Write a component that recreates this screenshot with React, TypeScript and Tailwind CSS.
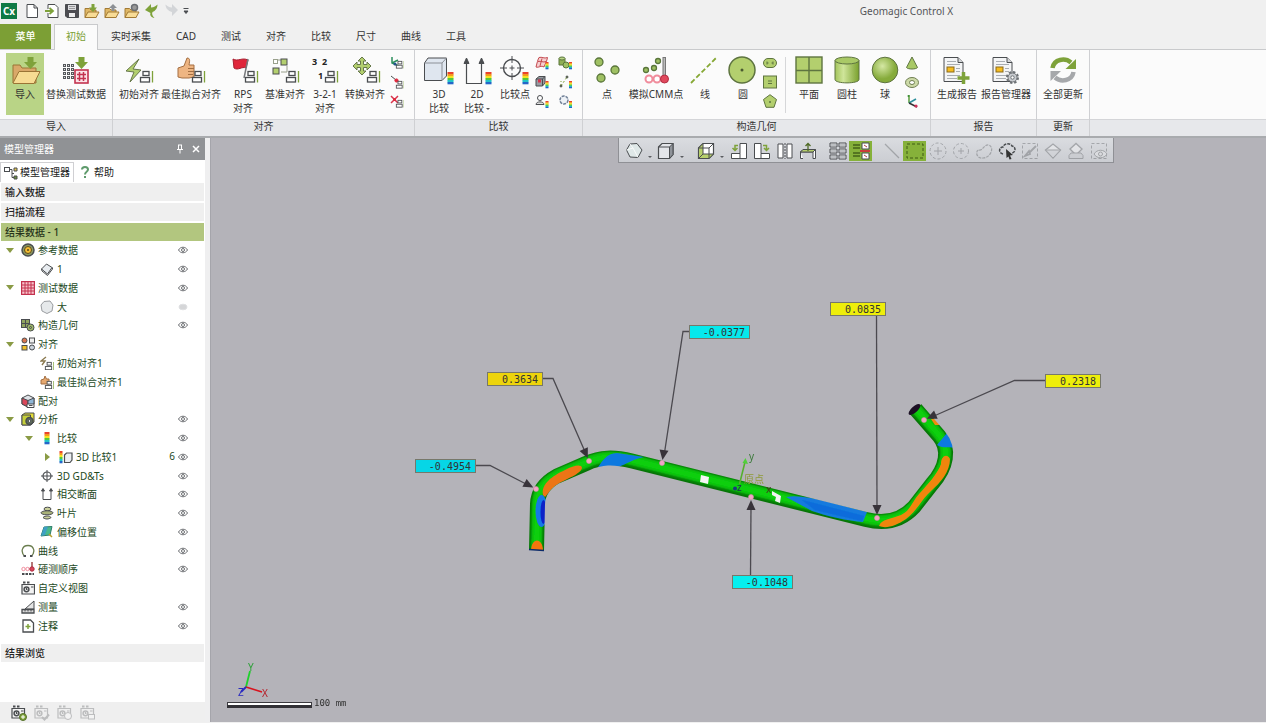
import type { ReactNode } from 'react'
import clsx from 'clsx'

/* ---------- shared drawing parts ---------- */

const INK = '#4a4d50'
const GREEN = '#7ea23a'
const LIME = '#b3cf6e'

type IconProps = { children: ReactNode; w?: number; h?: number }

function Svg({ children, w = 14, h = 14 }: IconProps) {
  return (
    <svg width={w} height={h} viewBox={`0 0 ${w} ${h}`} fill="none" stroke={INK} className="shrink-0" aria-hidden="true">
      {children}
    </svg>
  )
}

function Big({ children }: { children: ReactNode }) {
  return <Svg w={36} h={32}>{children}</Svg>
}

function Badge({ x, y, s = 1 }: { x: number; y: number; s?: number }) {
  return (
    <g transform={`translate(${x} ${y}) scale(${s})`} strokeWidth="1.3">
      <rect x="3" y="0.5" width="6" height="4" fill="#fff" />
      <rect x="0.5" y="6.5" width="9" height="4.5" fill="#fff" />
      <path d="M12.5 0V11.5" stroke={GREEN} />
    </g>
  )
}

function Heat({ x, y, w = 6, h = 12 }: { x: number; y: number; w?: number; h?: number }) {
  const colors = ['#e8442c', '#f59a1c', '#f2e41e', '#55c83a', '#22c4c8', '#2466c8']
  return (
    <g stroke="none">
      {colors.map((c, i) => (
        <rect key={c} x={x} y={y + (i * h) / 6} width={w} height={h / 6 + 0.3} fill={c} />
      ))}
    </g>
  )
}

function DownArrow({ x, y }: { x: number; y: number }) {
  return <path transform={`translate(${x} ${y})`} d="M3.5 0H9.500V5H13L6.500 12L0 5H3.500Z" fill={GREEN} stroke="none" />
}

function Folder() {
  return (
    <g stroke="#a27a35" strokeWidth="1">
      <path d="M1 14.500V5.500H5.500L7 7H12V14.500Z" fill="#dfb765" />
      <path d="M1 14.500L4 9H15L12 14.500Z" fill="#f8dc96" />
    </g>
  )
}

function Report() {
  return (
    <g>
      <path d="M5 3.500H19L24 8.500V27.500H5Z" fill="#f4f5f6" />
      <path d="M19 3.500V8.500H24" fill="#d4d6d8" />
      <path d="M8 7.500H17M8 10.500H21M17 14.500H21M17 17.500H21M8 21.500H21M8 24.500H18" stroke="#a9adb2" />
      <rect x="8" y="13" width="7" height="5" fill="#f5bb1e" stroke="#8a6a1a" />
    </g>
  )
}

function Camera() {
  return (
    <g>
      <path d="M1 3.500H13.500V13H1Z" fill="#f2f2f2" strokeWidth="1.200" />
      <path d="M2 1.500H4.500M6 1.500H8.500" strokeWidth="2" />
      <circle cx="5.500" cy="8.300" r="2.400" strokeWidth="1.500" />
      <path d="M5.500 7V8.500H6.500M10 6H12.500" strokeWidth="1.200" />
    </g>
  )
}

/* ---------- quick access bar ---------- */

const quickTools: { name: string; icon: ReactNode }[] = [
  { name: 'New', icon: <path d="M3 1.500H10L13.500 5V14.500H3Z M10 1.500V5H13.500" fill="#fff" /> },
  {
    name: 'Open',
    icon: (
      <>
        <path d="M4 6V1.500H11L14 4.500V14.500H4V10" fill="#fff" />
        <path d="M1 8H8M5.500 5L9 8L5.500 11" stroke={GREEN} strokeWidth="1.800" />
      </>
    ),
  },
  {
    name: 'Save',
    icon: (
      <>
        <path d="M1.500 1.500H14.500V14.500H3L1.500 13Z" fill="#4d4d52" />
        <path d="M4 2H12V7H4Z" fill="#dcdde0" stroke="none" />
        <path d="M5 10H11V14H5Z" fill="#eee" stroke="none" />
        <path d="M5 3.500H11M5 5.500H11" stroke="#888" strokeWidth="0.800" />
      </>
    ),
  },
  { name: 'Import', icon: <><Folder /><path d="M7.500 1H10.500V4.500H13L9 9L5 4.500H7.500Z" fill={GREEN} stroke="none" /></> },
  { name: 'Export', icon: <><Folder /><path d="M7.500 8H10.500V5H13L9 1L5 5H7.500Z" fill="#8c8f94" stroke="none" /></> },
  { name: 'Folder settings', icon: <><Folder /><circle cx="10.500" cy="4.500" r="3" fill="#999" stroke="#6b6e73" strokeWidth="1.500" /></> },
  { name: 'Undo', icon: <path d="M1 7L7 1V4.500C10 4.500 12 3 13.500 1.500C13.500 5 11.500 8 8.500 9C7.500 11 8.500 13 10.500 15C7 14.500 5.500 12 6.500 10Z" fill={GREEN} stroke="none" /> },
  { name: 'Redo', icon: <path d="M14 7L8 1V4.500C5 4.500 3 3 1.500 1.500C1.500 5 4 8 8 9V13Z" fill="#d3d5d8" stroke="none" /> },
]

function TitleBar() {
  return (
    <div className="flex h-6 items-center pb-0.5">
      <div className="ml-px flex size-4 items-center justify-center bg-[#0f7a45] text-[10px] font-bold text-white">Cx</div>
      <div className="ml-[7px] flex gap-1">
        {quickTools.map((t) => (
          <button key={t.name} type="button" aria-label={t.name}>
            <Svg w={16} h={16}>{t.icon}</Svg>
          </button>
        ))}
      </div>
      <button type="button" aria-label="Customize" className="ml-0.5">
        <Svg w={8} h={8}><path d="M1.500 1.500H6.500M2 4L4 6.500L6 4Z" fill={INK} /></Svg>
      </button>
      <h1 className="ml-auto mr-[313px] text-[10px] text-[#55565a]">Geomagic Control X</h1>
    </div>
  )
}

const tabs = ['实时采集', 'CAD', '测试', '对齐', '比较', '尺寸', '曲线', '工具']

function TabBar() {
  return (
    <nav className="flex h-[26px] items-stretch gap-px border-b border-[#c9cacc] text-[10px] text-[#333]">
      <button type="button" className="w-[51px] bg-[#7c9f35] font-medium text-white">菜单</button>
      <button type="button" className="-mb-px ml-0.5 w-11 border border-b-0 border-[#c9cacc] bg-[#fbfbfb] pb-0.5 text-[#7c9f35]">初始</button>
      {tabs.map((t) => (
        <button key={t} type="button" className="px-3">{t}</button>
      ))}
    </nav>
  )
}

/* ---------- ribbon ---------- */

function Tool({ icon, label, width = 'w-9', active = false }: { icon: ReactNode; label: ReactNode; width?: string; active?: boolean }) {
  return (
    <button type="button" className={clsx('flex h-[62px] shrink-0 flex-col items-center whitespace-nowrap pt-px', width, active && 'bg-[#b9d486]')}>
      {icon}
      <span className="mt-px text-[10px] leading-[14px]">{label}</span>
    </button>
  )
}

function SmallTools({ items, className }: { items: [string, ReactNode][]; className?: string }) {
  return (
    <div className={clsx('flex flex-col gap-[5px] pt-[3px]', className)}>
      {items.map(([name, icon]) => (
        <button key={name} type="button" aria-label={name}>
          <Svg>{icon}</Svg>
        </button>
      ))}
    </div>
  )
}

function Group({ title, className, children }: { title: string; className?: string; children: ReactNode }) {
  return (
    <section className={clsx('flex shrink-0 flex-col border-r border-[#cfd0d3]', className)}>
      <div className="flex h-[69px] gap-0.5 pl-1.5 pt-[3px]">{children}</div>
      <h2 className="h-[17px] text-center text-[10px] leading-[14px]">{title}</h2>
    </section>
  )
}

const dot = (cx: number, cy: number, r: number) => <circle cx={cx} cy={cy} r={r} fill="#9fc063" stroke="#59753a" strokeWidth="1.300" />

const Triad = (
  <g strokeWidth="1.500">
    <path d="M4 1V9" stroke="#5a9c3c" />
    <path d="M4 9L11 5" stroke="#2b8f9c" />
    <path d="M4 9L12 13" stroke="#333" />
    <circle cx="3.500" cy="2" r="1" fill="#3b8e34" stroke="none" />
    <circle cx="11" cy="12" r="1.600" fill="#d22f5a" stroke="none" />
  </g>
)

function Ribbon() {
  return (
    <div className="flex overflow-hidden border-b-2 border-[#a9abae] bg-[linear-gradient(#fbfbfb_69px,#d4d5d8_69px,#d4d5d8_70px,#e7e8eb_70px)] text-[#333]">
      <Group title="导入" className="w-[113px]">
        <Tool
          active
          label="导入"
          width="w-[38px]"
          icon={
            <Big>
              <g stroke="#9a7435">
                <path d="M6 29V11H13L15 14H29V29Z" fill="#d9a869" />
                <path d="M6 29L12 17.500H33L27 29.500H7Z" fill="#f7db92" />
              </g>
              <DownArrow x={17} y={3} />
            </Big>
          }
        />
        <Tool
          label="替换测试数据"
          width="w-[60px]"
          icon={
            <Big>
              <path d="M5 11.500H16M5 15.500H16M5 19.500H16M5 23.500H16" stroke="#55585c" strokeWidth="3" strokeDasharray="3 1" />
              <path d="M6 11.500H17M6 15.500H17M6 19.500H17M6 23.500H17" stroke="#ddd" strokeWidth="1" strokeDasharray="1 3" />
              <rect x="17" y="16" width="13" height="13" fill="#fbe3e8" stroke="#c3324f" strokeWidth="1.600" />
              <path d="M21.500 18V27M25.500 18V27M19 20.500H28M19 24.500H28" stroke="#c3324f" strokeWidth="1.500" />
              <DownArrow x={17} y={3} />
            </Big>
          }
        />
      </Group>

      <Group title="对齐" className="w-[302px]">
        <Tool
          label="初始对齐"
          width="w-10"
          icon={<Big><path d="M18 5L5 17L13 18L9 28L20 16L12 15Z" fill={LIME} stroke="#66774a" /><Badge x={19} y={17} /></Big>}
        />
        <Tool
          label="最佳拟合对齐"
          width="w-[60px]"
          icon={
            <Big>
              <path d="M5 14L11 12L14 4C17 4 17 6 16 11H21V23L16 24H9L5 23Z" fill="#eeb582" stroke="#a46f42" />
              <path d="M15 14.500H21M15 17.500H21M15 20.500H20" stroke="#a46f42" />
              <Badge x={19} y={17} />
            </Big>
          }
        />
        <Tool
          label={<>RPS<br />对齐</>}
          width="w-10"
          icon={
            <Big>
              <path d="M8 5C13 8 17 3 23 6L21 14C17 12 13 17 9 14Z" fill="#e0263b" stroke="#a81f30" />
              <path d="M23 5L19 24" stroke="#77797c" strokeWidth="1.500" />
              <Badge x={20} y={17} />
            </Big>
          }
        />
        <Tool
          label="基准对齐"
          width="w-10"
          icon={
            <Big>
              <path d="M8 10V6H15M20 12V18H14" stroke="#99a08c" />
              <rect x="14" y="5" width="6" height="6" fill={LIME} />
              <rect x="6" y="14" width="6" height="6" fill={LIME} />
              <rect x="6.500" y="5.500" width="4" height="4" fill="#fff" stroke="#99a08c" />
              <Badge x={19} y={17} />
            </Big>
          }
        />
        <Tool
          label={<>3-2-1<br />对齐</>}
          icon={
            <Big>
              <g fill="#222" stroke="none" className="text-[9px] font-bold">
                <text x="5" y="11">3</text>
                <text x="15" y="11">2</text>
                <text x="11" y="25">1</text>
              </g>
              <Badge x={18} y={17} />
            </Big>
          }
        />
        <Tool
          label="转换对齐"
          width="w-10"
          icon={
            <Big>
              <path
                d="M15 3L19 7H16.500V10.500H20V8L24 12L20 16V13.500H16.500V17H19L15 21L11 17H13.500V13.500H10V16L6 12L10 8V10.500H13.500V7H11Z"
                fill={LIME}
                stroke="#66774a"
              />
              <Badge x={20} y={17} />
            </Big>
          }
        />
        <SmallTools
          className="ml-[3px]"
          items={[
            ['Coordinate align', <><path d="M2 1V7L9 10M2 7L8 4" stroke="#2b8f5c" strokeWidth="1.500" /><circle cx="5" cy="8" r="1.500" fill="#25508f" stroke="none" /><Badge x={6} y={5} s={0.65} /></>],
            ['Line align', <><path d="M1 1L6 5" /><circle cx="6.500" cy="5.500" r="1.600" fill="#e0263b" stroke="#e0263b" /><Badge x={6} y={6} s={0.65} /></>],
            ['Point align', <><path d="M1 2L8 9M8 2L1 9" stroke="#d8344c" strokeWidth="1.500" /><circle cx="4.500" cy="5.500" r="1.500" fill="#e0263b" stroke="none" /><Badge x={6} y={6} s={0.65} /></>],
          ]}
        />
      </Group>

      <Group title="比较" className="w-[168px]">
        <Tool
          label={<>3D<br />比较</>}
          icon={
            <Big>
              <path d="M3.500 9L7 4H25.500V22L21 26.500H3.500Z" fill="#dfe6ef" />
              <path d="M3.500 9H21V26.500M21 9L25.500 4" stroke="#8c9097" />
              <Heat x={26.500} y={18} />
            </Big>
          }
        />
        <Tool
          label={<>2D<br />比较<i className="ml-0.5 inline-block border-x-2 border-t-2 border-x-transparent border-t-[#555] align-middle" /></>}
          icon={
            <Big>
              <path d="M7.500 8V29.500H22.500V8" strokeWidth="1.200" />
              <path d="M7.500 4L10 9.500H5ZM22.500 4L25 9.500H20Z" fill={INK} />
              <Heat x={26.500} y={18} />
            </Big>
          }
        />
        <Tool
          label="比较点"
          icon={
            <Big>
              <circle cx="15" cy="14" r="8.500" strokeWidth="1.400" />
              <path d="M15 2V9M15 19V26M3 14H10M20 14H27M12.500 14H17.500M15 11.500V16.500" />
              <Heat x={25.500} y={18} />
            </Big>
          }
        />
        <SmallTools
          items={[
            ['Surface compare', <><path d="M1 11C2 7 3 3 4 1.500C7 .5 9 3 12.500 1.500C12 5 10 8 9 11C6 9 4 12 1 11Z" fill="#f6cfd0" stroke="#c44a50" /><path d="M3 5.500C6 4.500 8 7 11 5.500M7 2.500L5 10" stroke="#c44a50" /><Heat x={10.500} y={6} w={3} h={7} /></>],
            ['Solid compare', <><path d="M1 4L4 1.500H10V8L7.500 11H1Z" fill="#999ca2" /><path d="M1 4H7.500V11M7.500 4L10 1.500" /><rect x="3" y="4.500" width="3" height="3" fill="#d8344c" stroke="none" /><Heat x={10.500} y={6} w={3} h={7} /></>],
            ['Profile compare', <><circle cx="5" cy="4" r="2.500" fill="#fff" /><path d="M1 10.500C1 7 9 7 9 10.500Z" fill="#ddd" /><Heat x={10.500} y={7} w={3} h={7} /></>],
          ]}
        />
        <SmallTools
          className="ml-[7px]"
          items={[
            ['Cylinder compare', <><path d="M1 2.500H7V9H1Z" fill="#8fae55" stroke="#59753a" /><ellipse cx="4" cy="2.500" rx="3" ry="1.500" fill="#b9d486" stroke="#59753a" /><circle cx="8" cy="9" r="3" fill="#9fc063" stroke="#59753a" /><Heat x={11} y={6} w={3} h={7} /></>],
            ['Point deviation', <><path d="M3 11L9 2M3 11V6" strokeDasharray="2 2" stroke="#7ea23a" /><circle cx="9" cy="2" r="1" fill={GREEN} /><circle cx="3" cy="11" r="1" fill={GREEN} /><Heat x={11} y={6} w={3} h={7} /></>],
            ['Circle deviation', <><circle cx="6" cy="6" r="4" stroke="#6f7f96" strokeDasharray="3 1" strokeWidth="1.500" fill="#eef2f7" /><Heat x={11} y={7} w={3} h={7} /></>],
          ]}
        />
      </Group>

      <Group title="构造几何" className="w-[348px]">
        <Tool label="点" icon={<Big>{dot(10, 8, 4)}{dot(26, 16, 4)}{dot(12, 24, 4)}</Big>} />
        <Tool
          label="模拟CMM点"
          width="w-[58px]"
          icon={
            <Big>
              {dot(8, 16, 2.5)}{dot(16, 14, 2.5)}{dot(20, 7, 2.5)}
              <rect x="25" y="3.500" width="2.500" height="18" fill="#bbb" stroke="#777" />
              <circle cx="11" cy="25" r="3.500" fill="#fff" stroke="#f08c9c" strokeWidth="2" />
              <circle cx="19" cy="25" r="3.500" fill="#fff" stroke="#f08c9c" strokeWidth="2" />
              <circle cx="26.500" cy="25" r="4" fill="#e0485c" stroke="#b12d42" />
            </Big>
          }
        />
        <Tool label="线" icon={<Big><path d="M4 29L30 3" stroke="#86a834" strokeWidth="1.800" strokeDasharray="5 2.500" /></Big>} />
        <Tool label="圆" icon={<Big><circle cx="17" cy="16" r="13" fill={LIME} stroke="#5e7440" strokeWidth="1.500" /><circle cx="17" cy="16" r="1.500" fill="#4a5a30" stroke="none" /></Big>} />
        <SmallTools
          items={[
            ['Slot', <><rect x="0.500" y="2.500" width="13" height="9" rx="4.500" fill={LIME} stroke="#5e7440" /><path d="M4 5.500V8.500M10 5.500V8.500M4 7H5.500M8.500 7H10" stroke="#5e7440" /></>],
            ['Rectangle', <><rect x="0.500" y="1" width="13" height="12" fill={LIME} stroke="#5e7440" /><path d="M5 6H9M5 8.500H9" stroke="#5e7440" /></>],
            ['Polygon', <><path d="M7 .7L13.500 5.500L11 13.300H3L.5 5.500Z" fill={LIME} stroke="#5e7440" /><circle cx="7" cy="8" r="1" fill="#5e7440" stroke="none" /></>],
          ]}
        />
        <div className="mx-1.5 mt-1 h-14 w-px bg-[#d6d7d9]" />
        <div className="-ml-[3px] flex gap-0.5">
          <Tool label="平面" icon={<Big><rect x="5" y="3" width="26" height="26" fill={LIME} stroke="#5e7440" strokeWidth="1.400" /><path d="M18 3V29M5 16.500H31" stroke="#5e7440" strokeWidth="1.400" /></Big>} />
          <Tool
            label="圆柱"
            icon={
              <Big>
                <defs>
                  <linearGradient id="cyl"><stop stopColor="#a3c45b" /><stop offset=".35" stopColor="#cfe59a" /><stop offset="1" stopColor="#79a02d" /></linearGradient>
                </defs>
                <path d="M6 6.500V25.500C6 30 30 30 30 25.500V6.500Z" fill="url(#cyl)" stroke="#5e7440" />
                <ellipse cx="18" cy="6.500" rx="12" ry="3.500" fill="#a9c966" stroke="#5e7440" />
              </Big>
            }
          />
          <Tool
            label="球"
            icon={
              <Big>
                <defs>
                  <radialGradient id="ball" cx=".4" cy=".35"><stop stopColor="#d5e8a4" /><stop offset="1" stopColor="#86ab3b" /></radialGradient>
                </defs>
                <circle cx="18" cy="16" r="12.800" fill="url(#ball)" stroke="#5e7440" />
              </Big>
            }
          />
        </div>
        <SmallTools
          items={[
            ['Cone', <path d="M7 1L12.500 11.500C11 13.500 3 13.500 1.500 11.500Z" fill="#a9c966" stroke="#5e7440" />],
            ['Torus', <><ellipse cx="7" cy="7.500" rx="6.500" ry="5" fill="#cddaa8" stroke="#6f7f52" /><ellipse cx="7" cy="7.500" rx="2.500" ry="2" fill="#fff" stroke="#6f7f52" /></>],
            ['Coordinate', Triad],
          ]}
        />
      </Group>

      <Group title="报告" className="w-[106px]">
        <Tool label="生成报告" width="w-10" icon={<Big><Report /><path d="M24.500 18V30M18.500 24H30.500" stroke={GREEN} strokeWidth="3.500" /></Big>} />
        <Tool
          label="报告管理器"
          width="w-[54px]"
          icon={
            <Big>
              <Report />
              <circle cx="24.500" cy="23.500" r="5.500" stroke="#6e7276" strokeWidth="2" strokeDasharray="2.400 1.900" />
              <circle cx="24.500" cy="23.500" r="4.500" fill="#c9ccd0" stroke="#6e7276" />
              <circle cx="24.500" cy="23.500" r="1.700" fill="#fff" stroke="#6e7276" />
            </Big>
          }
        />
      </Group>

      <Group title="更新" className="w-[53px]">
        <Tool
          label="全部更新"
          width="w-10"
          icon={
            <Big>
              <path d="M7.500 14C9 5 20 3.500 26 8.500" stroke={GREEN} strokeWidth="4.500" />
              <path d="M31 5V15H20.500Z" fill={GREEN} stroke="none" />
              <path d="M28.500 18C27 27 16 28.500 10 23.500" stroke="#a6a8ab" strokeWidth="4.500" />
              <path d="M5.500 27V17H16Z" fill="#a6a8ab" stroke="none" />
            </Big>
          }
        />
      </Group>
    </div>
  )
}

/* ---------- model tree ---------- */

type Node = { label: string; level: 0 | 1 | 2; icon: ReactNode; caret?: 'down' | 'right'; eye?: 'on' | 'off'; count?: number }

const cubeFace = <path d="M1 4L7 1L13 4V10L7 13L1 10Z" fill="#dfe3e8" />

const nodes: Node[] = [
  { label: '参考数据', level: 0, caret: 'down', eye: 'on', icon: <><circle cx="7" cy="7" r="6" fill="#8d9b62" strokeWidth="1.500" /><circle cx="7" cy="7" r="3.500" fill="#f4bd33" stroke="#5a4a20" /><circle cx="7" cy="7" r="1" fill="#5a4a20" stroke="none" /></> },
  { label: '1', level: 1, eye: 'on', icon: <><path d="M1.500 7L6.500 2L12 5.500L7.500 12Z" fill="#e9edf1" /><path d="M1.500 7L2 9L7.500 13.500L12.500 7V5.500" /></> },
  { label: '测试数据', level: 0, caret: 'down', eye: 'on', icon: <><rect x="0.500" y="0.500" width="13" height="13" fill="#f8c3cb" stroke="#c3324f" strokeWidth="1.400" /><path d="M4 1V13M7 1V13M10 1V13M1 4H13M1 7H13M1 10H13" stroke="#c3324f" /></> },
  { label: '大', level: 1, eye: 'off', icon: <path d="M4 1.500L10 1L13 5L12 11L7 13.500L2 11L1 5Z" fill="#e6e9eb" stroke="#9a9da1" /> },
  { label: '构造几何', level: 0, eye: 'on', icon: <><rect x="0.500" y="1.500" width="8" height="8" fill="#8fa35e" /><path d="M4.500 1.500V9.500M.5 5.500H8.500" /><circle cx="9.500" cy="9.500" r="3.500" fill="#9fb768" /><circle cx="9.500" cy="9.500" r="1" /></> },
  { label: '对齐', level: 0, caret: 'down', icon: <><circle cx="3.500" cy="3.500" r="2.500" fill="#d9744e" /><rect x="8.500" y="1" width="5" height="5" fill="#eee" /><rect x="1" y="8.500" width="5" height="4.500" fill="#f0c02a" /><circle cx="11" cy="10.500" r="2.500" fill="#ccd3dc" /></> },
  { label: '初始对齐1', level: 1, icon: <><path d="M6 1L1 5H5L2 9" stroke="#8b7a50" strokeWidth="1.400" /><Badge x={5} y={6} s={0.7} /></> },
  { label: '最佳拟合对齐1', level: 1, icon: <><path d="M1 5L4 4L5 1L6.500 4H9V9H1Z" fill="#e5a86f" stroke="#a46f42" /><Badge x={5} y={6} s={0.7} /></> },
  { label: '配对', level: 0, icon: <>{cubeFace}<path d="M1 4L7 6.500V13L1 10Z" fill="#d8475a" /><path d="M7 6.500L13 4V10L7 13Z" fill="#8fb7d8" /><path d="M6 10H13V13.500H6Z" fill="#fff" /><path d="M8 11.500H11.500" /></> },
  { label: '分析', level: 0, caret: 'down', eye: 'on', icon: <><path d="M1 3L4 1H13V10L10 13H1Z" fill="#e3dd38" /><path d="M1 3H9.500V13H1Z" fill="#c5cf3b" /><circle cx="8.500" cy="9" r="3.500" fill="#5f6f5a" strokeWidth="1.500" /><circle cx="8.500" cy="9" r="1.300" fill="#fff" /></> },
  { label: '比较', level: 1, caret: 'down', eye: 'on', icon: <Heat x={4.500} y={1} w={5} h={12} /> },
  { label: '3D 比较1', level: 2, caret: 'right', eye: 'on', count: 6, icon: <><Heat x={0.500} y={1} w={3} h={12} /><path d="M5.500 5L7.500 3H13V10L11 12.500H5.500Z" fill="#eceff3" strokeWidth="1.200" /></> },
  { label: '3D GD&Ts', level: 1, eye: 'on', icon: <><circle cx="7" cy="7" r="4" strokeWidth="1.200" /><path d="M7 1V13M1 7H13" /></> },
  { label: '相交断面', level: 1, eye: 'on', icon: <><path d="M3 3V12.500H11V3" /><path d="M3 1.500L4.500 4H1.500ZM11 1.500L12.500 4H9.500Z" fill={INK} /></> },
  { label: '叶片', level: 1, eye: 'on', icon: <><ellipse cx="7.500" cy="3" rx="3.500" ry="1.800" fill="#c9cf9a" /><ellipse cx="7" cy="6.800" rx="6" ry="2" fill="#a9b279" /><path d="M3 11.500C5 9.500 10 9.500 11 11.500C9 13.500 5 13.500 3 11.500Z" fill="#c9cf9a" /></> },
  { label: '偏移位置', level: 1, eye: 'on', icon: <><path d="M1 11L4 2L12 1.500L10 10Z" fill="#49b98b" stroke="#2f7d6c" /><path d="M4 2L8 1.500L5 10L1 11Z" fill="#3f9fc4" stroke="none" /><path d="M9 9L12 12" stroke="#b6a030" strokeWidth="1.500" /></> },
  { label: '曲线', level: 0, eye: 'on', icon: <><path d="M4 12.500C-1 8 1 1.500 7 1.500S15 8 10 12.500" stroke="#6a7d4e" strokeWidth="1.300" /><path d="M2.500 12H5M9 12H11.500" strokeWidth="2" /></> },
  { label: '硬测顺序', level: 0, eye: 'on', icon: <><path d="M11 0V7" stroke="#9d4a4a" strokeWidth="1.500" /><circle cx="2.500" cy="7" r="1.700" stroke="#f08c9c" /><circle cx="6.500" cy="7" r="1.700" stroke="#f08c9c" /><circle cx="11" cy="7" r="2.200" fill="#d8475a" stroke="#b12d42" /><path d="M1 12H13" strokeWidth="2" strokeDasharray="2.500 1" /></> },
  { label: '自定义视图', level: 0, icon: <Camera /> },
  { label: '测量', level: 0, eye: 'on', icon: <><path d="M13 1V9L4 9Z" fill="#e4e4e4" /><path d="M1 9.500H13V13H1Z" fill="#ddd" strokeWidth="1.300" /><path d="M4 10V11.500M7 10V11.500M10 10V11.500" /></> },
  { label: '注释', level: 0, eye: 'on', icon: <><path d="M2 1H9.500L12.500 4V13H2Z" fill="#fff" strokeWidth="1.300" /><path d="M7 5V10M4.500 7.500H9.500" stroke={GREEN} strokeWidth="1.500" /></> },
]

const indent = ['pl-[3px]', 'pl-[22px]', 'pl-[41px]']

function TreeRow({ node }: { node: Node }) {
  return (
    <li className={clsx('flex flex-1 items-center', indent[node.level])}>
      <span className="flex w-[13px] justify-center">
        {node.caret === 'down' && <i className="border-x-4 border-t-[5px] border-x-transparent border-t-[#8a9b45]" />}
        {node.caret === 'right' && <i className="border-y-4 border-l-[5px] border-y-transparent border-l-[#8a9b45]" />}
      </span>
      <span className="ml-[5px] mr-[3px]"><Svg>{node.icon}</Svg></span>
      <span className="flex-1 whitespace-nowrap leading-4">{node.label}</span>
      {node.count && <span className="mr-[3px]">{node.count}</span>}
      {node.eye && (
        <button type="button" aria-label={`${node.label} visibility`} className="mr-[17px]">
          <Svg w={10} h={8}>
            {node.eye === 'on' ? (
              <g stroke="#6c6e72">
                <path d="M.5 4C2.500 .3 7.500 .3 9.500 4C7.500 7.700 2.500 7.700 .5 4Z" />
                <circle cx="5" cy="4" r="1.500" />
              </g>
            ) : (
              <ellipse cx="5" cy="4" rx="4" ry="2.800" fill="#d5d6d8" stroke="#dfe0e2" />
            )}
          </Svg>
        </button>
      )}
    </li>
  )
}

function SectionBar({ children, active = false }: { children: ReactNode; active?: boolean }) {
  return (
    <h3 className={clsx('mr-px h-[18px] pl-1 font-medium leading-[18px]', active ? 'bg-[#b2c67f] text-[#26331a]' : 'bg-[#efefef] text-[#222]')}>
      {children}
    </h3>
  )
}

function SidePanel() {
  return (
    <aside className="flex w-[205px] shrink-0 flex-col bg-white text-[10px]">
      <header className="flex h-[22px] items-center bg-[#909295] px-1 text-white">
        <h2 className="flex-1">模型管理器</h2>
        <button type="button" aria-label="Pin" className="mr-1.5">
          <Svg w={10} h={10}><path d="M3 1H7M3.500 1V5.500M6.500 1V5.500M2 5.500H8M5 5.500V9.500" stroke="#fff" /></Svg>
        </button>
        <button type="button" aria-label="Close">
          <Svg w={10} h={10}><path d="M2 2L8 8M8 2L2 8" stroke="#fff" strokeWidth="1.500" /></Svg>
        </button>
      </header>
      <div className="flex h-[22px] items-stretch pt-0.5 text-[#222]">
        <button type="button" className="flex w-[74px] items-center gap-0.5 whitespace-nowrap border border-b-0 border-[#d0d0d3] pl-[3px]">
          <Svg><rect x="0.500" y="1.500" width="5" height="4" /><path d="M6 3.500H8V11.500H10M8 7.500H10" /><path d="M10 2H13V5H10Z" fill="#e5c74d" /><path d="M10 10H13V13H10Z" fill="#6a8f3c" /></Svg>
          模型管理器
        </button>
        <button type="button" className="flex items-center gap-1 pl-1.5">
          <Svg w={10} h={14}><path d="M2 4.500C2 1 8 1 8 4.500C8 7 5 6.500 5 9.500M5 11V13" stroke="#5f9b6c" strokeWidth="2" /></Svg>
          帮助
        </button>
      </div>
      <div className="flex flex-col gap-0.5 pl-px pt-px">
        <SectionBar>输入数据</SectionBar>
        <SectionBar>扫描流程</SectionBar>
        <SectionBar active>结果数据 - 1</SectionBar>
      </div>
      <ul className="flex h-[394px] flex-col text-[#23491d]">
        {nodes.map((n) => (
          <TreeRow key={n.label} node={n} />
        ))}
      </ul>
      <div className="pl-px pt-[9px]">
        <SectionBar>结果浏览</SectionBar>
      </div>
      <footer className="mt-auto flex h-5 items-center gap-[7px] bg-[#efefef] pl-[11px] pt-px">
        {['Capture', 'Apply view', 'Update view', 'Export view'].map((name, i) => (
          <button key={name} type="button" aria-label={name} className={i > 0 ? 'opacity-30' : ''}>
            <Svg w={16} h={16}>
              <Camera />
              {i === 0 && <><circle cx="12" cy="12" r="3.500" fill={GREEN} stroke="#55702a" /><path d="M12 10V14M10 12H14" stroke="#fff" /></>}
              {i === 1 && <path d="M8 12L10.500 14.500L15 9.500" strokeWidth="2" />}
              {i === 2 && <circle cx="11" cy="11" r="3.500" fill="#fff" />}
              {i === 3 && <rect x="8.500" y="9.500" width="6" height="4.500" fill="#fff" />}
            </Svg>
          </button>
        ))}
      </footer>
    </aside>
  )
}

/* ---------- view toolbar ---------- */

function ViewButton({ name, children, active = false, dim = false }: { name: string; children: ReactNode; active?: boolean; dim?: boolean }) {
  return (
    <button type="button" aria-label={name} className={clsx('flex h-5 w-[23px] shrink-0 items-center justify-center', active && 'bg-[#86b13a]')}>
      <span className={dim ? 'opacity-35' : ''}>
        <Svg w={18} h={18}>{children}</Svg>
      </span>
    </button>
  )
}

function DropMark({ name }: { name: string }) {
  return (
    <button type="button" aria-label={name} className="flex h-5 w-[9px] shrink-0 items-end justify-center pb-[3px]">
      <i className="border-x-2 border-t-2 border-x-transparent border-t-[#5a5c60]" />
    </button>
  )
}

function ViewToolbar() {
  return (
    <div className="absolute left-[407px] top-0 flex h-[25px] items-center border border-t-0 border-[#8f9095] bg-gradient-to-b from-[#dadce0] to-[#cbcdd2] px-[3px] pt-0.5">
      <ViewButton name="Shading">
        <path d="M5 2L12 1.500L17 8L13 15.500L5 15L1.500 8Z" fill="#dfe8e8" />
        <path d="M5 2L8 6L1.500 8M8 6L13 15.500" stroke="#f8fafa" />
      </ViewButton>
      <DropMark name="Shading options" />
      <ViewButton name="Display mode">
        <path d="M1.500 5L5 1.500H16V12.500L12.500 16.500H1.500Z" fill="#e3e5e9" strokeWidth="1.200" />
        <path d="M12.500 5L16 1.500V12.500L12.500 16.500Z" fill="#8f9399" />
        <path d="M1.500 5H12.500V16.500" />
      </ViewButton>
      <DropMark name="Display options" />
      <span className="w-2" />
      <ViewButton name="View direction">
        <path d="M1.500 6L6 1.500H16.500V12L12 16.500H1.500Z" fill="#fff" strokeWidth="1.200" />
        <path d="M1.500 16.500L6 12H16.500L12 16.500ZM1.500 6L6 1.500V12L1.500 16.500Z" fill="#b7cf6d" />
        <path d="M1.500 6H12V16.500M12 6L16.500 1.500" />
      </ViewButton>
      <DropMark name="View options" />
      <span className="w-px" />
      <ViewButton name="Rotate left">
        <path d="M1.500 11.500H10V1.500H16.500V16.500H1.500Z" fill="#fff" />
        <path d="M10 11.500V16.500" />
        <path d="M8 3.500H5V8M2.500 6L5 8.500L7.500 6" stroke={GREEN} strokeWidth="1.500" />
      </ViewButton>
      <ViewButton name="Rotate right">
        <path d="M1.500 1.500H8V11.500H16.500V16.500H1.500Z" fill="#fff" />
        <path d="M8 11.500V16.500" />
        <path d="M10 3.500H13.500V8M11 6L13.500 8.500L16 6" stroke={GREEN} strokeWidth="1.500" />
      </ViewButton>
      <ViewButton name="Mirror">
        <path d="M2 2H7V16H2ZM11 2H16V16H11Z" fill="#fff" />
        <path d="M9 1V17" strokeDasharray="2 1" />
      </ViewButton>
      <ViewButton name="Normal to">
        <path d="M1.500 10L4 7.500H16.500V16.500H14V10H1.500V16.500H4" fill="#fff" />
        <path d="M1.500 10L4 7.500H16.500L14 10Z" fill="#b7cf6d" />
        <path d="M9 9V2M6.500 4L9 1.500L11.500 4" stroke="#4f6a24" strokeWidth="1.300" />
      </ViewButton>
      <span className="w-[7px]" />
      <ViewButton name="Tile views">
        <path d="M1 1H8V5H1ZM10 1H17V5H10ZM1 7H8V11H1ZM10 7H17V11H10ZM1 13H8V17H1ZM10 13H17V17H10Z" fill="#eceef0" />
        <path d="M1 3H8M10 3H17M1 9H8M10 9H17M1 15H8M10 15H17" stroke="#8d9095" />
      </ViewButton>
      <ViewButton name="Callouts" active>
        <path d="M1 3H8M1 6H8M1 11H8M1 14H8" stroke="#46611a" strokeWidth="1.500" />
        <path d="M10 1H17V7H10ZM10 11H17V17H10Z" fill="#fff" />
        <path d="M8 9H18" stroke="#d22f3a" strokeWidth="1.800" />
        <path d="M12 3L15 5M12 13L15 15" stroke="#b04040" />
      </ViewButton>
      <span className="w-2" />
      <ViewButton name="Line select" dim><path d="M2 2L16 16" strokeWidth="1.300" /></ViewButton>
      <ViewButton name="Rectangle select" active><rect x="1" y="2" width="16" height="14" stroke="#3e5a15" strokeDasharray="3 2" /></ViewButton>
      <ViewButton name="Circle select" dim><circle cx="9" cy="9" r="8" strokeDasharray="3 2" /><path d="M9 5V13M5 9H13" /></ViewButton>
      <ViewButton name="Ellipse select" dim><circle cx="9" cy="9" r="7.500" strokeDasharray="3 2" /><path d="M9 6V12M6 9H12" /></ViewButton>
      <ViewButton name="Freeform select" dim><path d="M4 8C8 9 9 2 14 3C20 6 15 16 8 16C1 17 0 8 4 8Z" strokeDasharray="3 1" strokeWidth="1.200" /></ViewButton>
      <ViewButton name="Paint select">
        <path d="M5 12C0 11 1 5 5 5C6 1 13 1 14 4C18 5 18 10 14 11" strokeDasharray="3 1" strokeWidth="1.500" />
        <path d="M8 7L15 13L12 13.500L13.500 17L11.500 17.500L10.500 14.500L8.500 16Z" fill="#333" stroke="none" />
      </ViewButton>
      <ViewButton name="Extend select" dim><rect x="1.500" y="1.500" width="15" height="15" strokeDasharray="3 2" /><path d="M15 4L8 11M8 9L4 14L9 12Z" strokeWidth="1.800" /></ViewButton>
      <ViewButton name="Fill" dim><path d="M1.500 8L9 2L16.500 8L9 16Z" fill="#fff" strokeWidth="1.300" /><path d="M1.500 8H16.500L9 16Z" fill="#d3d5d9" /></ViewButton>
      <ViewButton name="Fill body" dim><path d="M3 7L9 1.500L15 7L9 13Z" fill="#fff" strokeWidth="1.300" /><path d="M2 13.500L4 11H14L16 13.500V16.500H2Z" fill="#c4c6ca" /></ViewButton>
      <ViewButton name="Visible only" dim><rect x="1.500" y="1.500" width="15" height="15" strokeDasharray="3 2" /><path d="M4 12C7 7 14 7 17 12C14 17 7 17 4 12Z" fill="#eee" /><circle cx="10.500" cy="12" r="2" /></ViewButton>
    </div>
  )
}

/* ---------- 3D viewport ---------- */

const PIPE =
  'M536.500 550L537.500 504C538 490 546 482 557 476L586 463.500C601 457 613 456.500 632 461L866 519.500C886 524.500 902 520 914 507L932 484C947 467 950 449 939 436L915.500 409'

const leaders = [
  { line: 'M543 378.500H553L586 454', at: [589, 461], angle: 66 },
  { line: 'M689 331.500H683L664 456', at: [662, 463], angle: 99 },
  { line: 'M475 465.500H490L528 485', at: [536, 489], angle: 28 },
  { line: 'M876.500 316L877 510', at: [877, 518], angle: 90 },
  { line: 'M1045 380.500H1014.500L934 416', at: [924, 420], angle: 156 },
  { line: 'M750.500 575L751 506', at: [751, 497], angle: 270 },
]

const callouts = [
  { value: '0.3634', box: 'left-[276px] top-[234px] w-14 bg-[#edd40c]' },
  { value: '-0.0377', box: 'left-[478px] top-[187px] w-[61px] bg-[#06e9ec]' },
  { value: '-0.4954', box: 'left-[204px] top-[321px] w-[61px] bg-[#06d6e6]' },
  { value: '0.0835', box: 'left-[619px] top-[164px] w-14 bg-[#eeee0a]' },
  { value: '0.2318', box: 'left-[834px] top-[236px] w-14 bg-[#eeee0a]' },
  { value: '-0.1048', box: 'left-[521px] top-[437px] w-[61px] bg-[#06efee]' },
]

function Scene() {
  return (
    <svg width="1055" height="584" viewBox="211 138 1055 584" fill="none" className="absolute left-0 top-0" role="img" aria-label="3D deviation map">
      <defs>
        <filter id="soft" x="-20%" y="-20%" width="140%" height="140%"><feGaussianBlur stdDeviation="1.300" /></filter>
        <filter id="edge" x="-20%" y="-20%" width="140%" height="140%"><feGaussianBlur stdDeviation=".7" /></filter>
        <mask id="tube" maskUnits="userSpaceOnUse" x="500" y="390" width="480" height="180">
          <path d={PIPE} stroke="#fff" strokeWidth="15" />
        </mask>
      </defs>

      {/* tube body with a lit upper side */}
      <g mask="url(#tube)">
        <path d={PIPE} stroke="#077307" strokeWidth="17" />
        <path d={PIPE} stroke="#09c40c" strokeWidth="11" filter="url(#soft)" transform="translate(0 -1)" />
        <path d={PIPE} stroke="#0ad00e" strokeWidth="5" filter="url(#soft)" transform="translate(0 -1)" />
        <g filter="url(#edge)">
          <ellipse cx="541.500" cy="511" rx="6" ry="16" fill="#1478e6" />
          <ellipse cx="543.500" cy="512" rx="3" ry="12" fill="#0a20c8" />
          <path d="M531 551C531 537 543 537 543 551Z" fill="#f4760e" />
          <path d="M543 495C541 484 552 476 565 470C574 465 582 464 582 468C581 474 566 479 558 484C551 488 549 493 545 497Z" fill="#ec7412" />
          <path d="M596 470C602 462 606 453 617 453L644 457C633 459 627 464 618 467C610 468 604 468 596 470Z" fill="#1179e0" />
          <path d="M786 497C797 495 812 498 825 501L867 512L863 522C848 521 826 516 812 511Z" fill="#127ade" />
          <path d="M802 500L864 516L862 521L815 510Z" fill="#0a62d8" opacity=".6" />
          <path d="M879 526C881 519 891 519 901 515C911 510 911 503 919 494C928 484 938 473 941 464C941 456 947 453 950 459C950 472 940 483 931 491C921 500 917 511 906 519C896 526 886 529 879 526Z" fill="#f0850f" />
          <path d="M937 445L947 433L955 448C949 446 944 449 937 445Z" fill="#1179e0" />
          <path d="M931 419L936 419L940 425L935 425Z" fill="#ee8a10" />
        </g>
      </g>
      <ellipse cx="914.500" cy="409.500" rx="7.500" ry="3" transform="rotate(-42 914.500 409.500)" fill="#1c1024" />
      <path d="M529 549.500L544 550.500" stroke="#0b2a6a" strokeWidth="1.500" />
      <path d="M701 475L709 477L708 484L700 482Z" fill="#f4f6f4" />
      <path d="M772 491L781 496L780 503L775 501L776 497L772 495Z" fill="#f0f3f0" />

      {/* origin marker */}
      <path d="M739.500 484L745 462" stroke="#54b02c" strokeWidth="1.500" />
      <path d="M745.500 458L748 464L742.500 463Z" fill="#4fd03a" />
      <circle cx="735" cy="488.500" r="2" fill="#1a3a7c" />
      <g className="text-[10px]">
        <text x="749" y="460" fill="#3c7a3a">y</text>
        <text x="737" y="491" fill="#1c2f52">z</text>
        <text x="766" y="493" fill="#46331c">x</text>
        <text x="744" y="483" fill="#8f9a3a">原点</text>
      </g>

      {/* callout leaders */}
      {leaders.map(({ line, at: [x, y], angle }) => (
        <g key={line}>
          <path d={line} stroke="#4b494f" strokeWidth="1.300" />
          <path d="M-3 0L-13 -4.500V4.500Z" fill="#38333a" transform={`translate(${x} ${y}) rotate(${angle})`} />
          <circle cx={x} cy={y} r="2.500" fill="#f3a6c6" stroke="#d98aae" strokeWidth=".6" />
        </g>
      ))}

      {/* view triad */}
      <path d="M246 687L250 671" stroke="#1fd02c" strokeWidth="1.800" />
      <path d="M246 687L262 692" stroke="#d8141f" strokeWidth="1.800" />
      <path d="M246 687L241 692" stroke="#2a2ac0" strokeWidth="1.800" />
      <g className="text-[10px]">
        <text x="248" y="671" fill="#2fa03a">Y</text>
        <text x="262" y="697" fill="#b3202a">X</text>
        <text x="238" y="696" fill="#2a2ac0">Z</text>
      </g>

      {/* scale bar */}
      <rect x="227.500" y="702.500" width="84" height="5" fill="#fff" stroke="#3c3b40" />
      <rect x="227" y="705" width="85" height="3" fill="#323136" />
      <text x="314" y="706" fill="#333" className="font-['DejaVu_Sans_Mono',monospace] text-[9px]">100 mm</text>
    </svg>
  )
}

function Viewport() {
  return (
    <main className="relative flex-1 overflow-hidden bg-[#b4b3b9]">
      <Scene />
      {callouts.map((c) => (
        <div
          key={c.value}
          className={clsx("absolute h-[14px] border border-[#77786a] pr-1 text-right font-['DejaVu_Sans_Mono',monospace] text-[10px] leading-[13px] text-[#333]", c.box)}
        >
          {c.value}
        </div>
      ))}
      <ViewToolbar />
    </main>
  )
}

export default function App() {
  return (
    <div className="flex h-screen flex-col overflow-hidden bg-[#f0f0f0] font-['Noto_Sans','Noto_Sans_CJK_SC',sans-serif]">
      <TitleBar />
      <TabBar />
      <Ribbon />
      <div className="mb-px flex min-h-0 flex-1">
        <SidePanel />
        <div className="w-1.5 shrink-0 border-r border-[#a5a5ab] bg-[#efeff0]" />
        <Viewport />
      </div>
    </div>
  )
}
